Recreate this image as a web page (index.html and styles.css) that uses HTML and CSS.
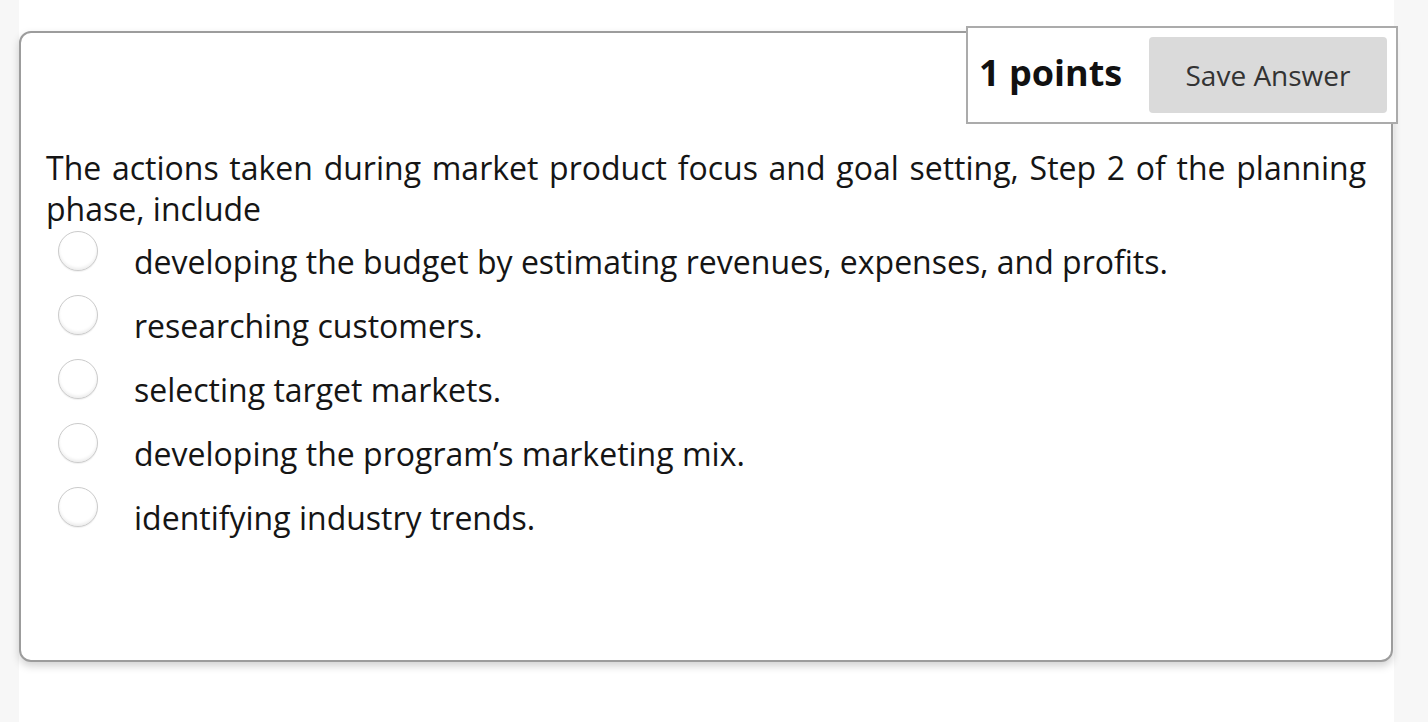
FILE: index.html
```html
<!DOCTYPE html>
<html lang="en">
<head>
<meta charset="utf-8">
<title>Question</title>
<link rel="stylesheet" href="styles.css">
</head>
<body>
<div class="page">
  <div class="card">
    <div class="points-box">
      <span class="points">1 points</span>
      <button class="save" type="button">Save Answer</button>
    </div>
    <p class="question">The actions taken during market product focus and goal setting, Step 2 of the planning phase, include</p>
    <ul class="options">
      <li class="option"><span class="radio"></span><span class="label">developing the budget by estimating revenues, expenses, and profits.</span></li>
      <li class="option"><span class="radio"></span><span class="label">researching customers.</span></li>
      <li class="option"><span class="radio"></span><span class="label">selecting target markets.</span></li>
      <li class="option"><span class="radio"></span><span class="label">developing the program’s marketing mix.</span></li>
      <li class="option"><span class="radio"></span><span class="label">identifying industry trends.</span></li>
    </ul>
  </div>
</div>
</body>
</html>
```
FILE: styles.css
```css
html, body {
  margin: 0;
  padding: 0;
  height: 100%;
}
body {
  background: #f7f7f7;
  font-family: "Open Sans", "Noto Sans", Arial, sans-serif;
  color: #151515;
}
.page {
  background: #ffffff;
  margin-left: 19px;
  width: 1375px;
  min-height: 100%;
  padding-top: 31px;
  box-sizing: border-box;
}
.card {
  position: relative;
  width: 1374px;
  height: 631px;
  box-sizing: border-box;
  border: 2px solid #9c9c9c;
  border-radius: 12px;
  box-shadow: 0 4px 9px rgba(0, 0, 0, 0.18);
  padding: 114px 25px 0 25px;
  background: #fff;
}
.points-box {
  position: absolute;
  top: -7px;
  right: -7px;
  width: 432px;
  height: 98px;
  box-sizing: border-box;
  border: 2px solid #ababab;
  background: #fff;
  display: flex;
  align-items: center;
  justify-content: space-between;
  padding: 0 9px 0 11px;
}
.points {
  font-weight: 700;
  font-size: 36px;
  color: #111;
  line-height: 1;
  margin-top: -5px;
}
.save {
  width: 238px;
  height: 76px;
  border: none;
  border-radius: 4px;
  background: #dadada;
  color: #333;
  font-family: "Open Sans", "Noto Sans", Arial, sans-serif;
  font-size: 28px;
  padding: 0;
}
.question {
  margin: 0;
  font-size: 32px;
  line-height: 41px;
  text-align: justify;
}
.options {
  list-style: none;
  margin: 0;
  padding: 0 0 0 12px;
}
.option {
  display: flex;
  align-items: flex-start;
  height: 64px;
}
.radio {
  flex: none;
  width: 40px;
  height: 40px;
  margin-top: 2px;
  box-sizing: border-box;
  border-radius: 50%;
  border: 1.5px solid #cbcbcb;
  background: #fff;
  box-shadow: inset 0 -2px 3px rgba(0, 0, 0, 0.07), 0 1px 1px rgba(0, 0, 0, 0.06);
}
.label {
  margin-left: 36px;
  padding-top: 15px;
  font-size: 32px;
  line-height: 35px;
}
```
